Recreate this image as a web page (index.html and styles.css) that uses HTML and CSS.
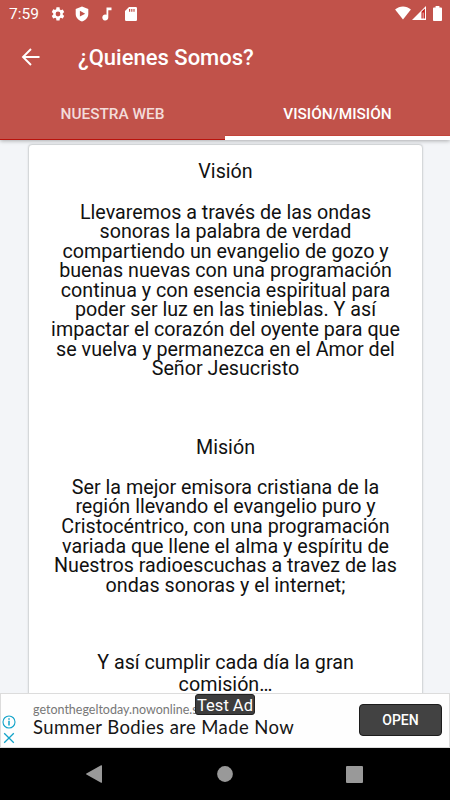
FILE: index.html
```html
<!DOCTYPE html>
<html lang="es">
<head>
<meta charset="utf-8">
<title>¿Quienes Somos?</title>
<link rel="stylesheet" href="styles.css">
</head>
<body>
<div class="screen">
  <header class="header">
    <div class="status">
      <span class="clock">7:59</span>
      <svg class="gear" width="16" height="16" viewBox="0 0 24 24"><path fill="#fff" d="M19.14 12.94c.04-.3.06-.61.06-.94s-.02-.64-.07-.94l2.03-1.58a.49.49 0 0 0 .12-.61l-1.92-3.32a.49.49 0 0 0-.59-.22l-2.39.96c-.5-.38-1.03-.7-1.62-.94l-.36-2.54A.48.48 0 0 0 13.92 2h-3.84c-.24 0-.43.17-.47.41l-.36 2.54c-.59.24-1.13.57-1.62.94l-2.39-.96a.48.48 0 0 0-.59.22L2.74 8.87a.48.48 0 0 0 .12.61l2.03 1.58c-.05.3-.09.63-.09.94s.02.64.07.94l-2.03 1.58a.49.49 0 0 0-.12.61l1.92 3.32c.12.22.37.29.59.22l2.39-.96c.5.38 1.03.7 1.62.94l.36 2.54c.05.24.24.41.48.41h3.84c.24 0 .44-.17.47-.41l.36-2.54c.59-.24 1.13-.56 1.62-.94l2.39.96c.22.08.47 0 .59-.22l1.92-3.32a.48.48 0 0 0-.12-.61zM12 15.6a3.6 3.6 0 1 1 0-7.2 3.6 3.6 0 0 1 0 7.2z"/></svg>
      <svg class="shield" width="14" height="16" viewBox="0 0 14 16"><path fill="#fff" fill-rule="evenodd" d="M7 .5 13.3 3v5c0 3.5-2.5 6.300-6.300 7.500C3.200 14.300.7 11.500.7 8V3zM4.900 4.800v5.800L10.200 7.700z"/></svg>
      <svg class="note" width="10" height="14" viewBox="0 0 10 14"><path fill="#fff" d="M4.500.6h5v2.700H6.300v7.200a3 3 0 1 1-1.800-2.700z"/></svg>
      <svg class="card-icon" width="12" height="14" viewBox="0 0 12 14"><path fill="#fff" fill-rule="evenodd" d="M4 0h6.800A1.200 1.200 0 0 1 12 1.200v11.600a1.200 1.200 0 0 1-1.200 1.200H1.200A1.200 1.200 0 0 1 0 12.800V4zM4 2v2.800h1.200V2zm2.200 0v2.800h1.200V2zm2.200 0v2.800h1.200V2z"/></svg>
      <svg class="wifi" width="16" height="14" viewBox="0 0 16 14"><path fill="#fff" d="M8 13.500.1 3.400C4.800-.5 11.200-.5 15.900 3.400z"/></svg>
      <svg class="signal" width="14" height="14" viewBox="0 0 14 14"><path fill="#fff" d="M14 0v14H0z"/><path fill="#c11e1a" d="M9.500 5.800 12.900 2.600v10H11.500V6.500h-.8v6H9.500z"/></svg>
      <svg class="battery" width="9" height="15" viewBox="0 0 9 15"><path fill="#fff" d="M2.600 0h3.800v1.400h1.500c.6 0 1.100.5 1.100 1.100v11.400c0 .6-.5 1.100-1.100 1.100H1.100C.5 15 0 14.500 0 13.900V2.500c0-.6.5-1.100 1.100-1.100h1.500z"/></svg>
    </div>
    <div class="toolbar">
      <svg class="back" width="20" height="18" viewBox="0 0 20 18"><path d="M18.500 9H2M10 1 2 9l8 8" fill="none" stroke="#fff" stroke-width="1.900"/></svg>
      <h1>¿Quienes Somos?</h1>
    </div>
    <nav class="tabs">
      <div class="tab"><span>NUESTRA WEB</span></div>
      <div class="tab active"><span>VISIÓN/MISIÓN</span></div>
    </nav>
  </header>
  <main class="content">
    <article class="card">
      <h2>Visión</h2>
      <p class="vision">Llevaremos a través de las ondas<br>sonoras la palabra de verdad<br>compartiendo un evangelio de gozo y<br>buenas nuevas con una programación<br>continua y con esencia espiritual para<br>poder ser luz en las tinieblas. Y así<br>impactar el corazón del oyente para que<br>se vuelva y permanezca en el Amor del<br>Señor Jesucristo</p>
      <h2 class="mission-title">Misión</h2>
      <p class="mission">Ser la mejor emisora cristiana de la<br>región llevando el evangelio puro y<br>Cristocéntrico, con una programación<br>variada que llene el alma y espíritu de<br>Nuestros radioescuchas a travez de las<br>ondas sonoras y el internet;</p>
      <p class="closing">Y así cumplir cada día la gran<br>comisión…</p>
    </article>
  </main>
  <aside class="ad">
    <div class="ad-icons">
      <svg width="14" height="14" viewBox="0 0 14 14"><circle cx="7" cy="7" r="6" fill="none" stroke="#12a3c9" stroke-width="1.100"/><path d="M7 5.800v4.600M7 3.200v1.500" stroke="#12a3c9" stroke-width="1.500"/></svg>
      <svg width="12" height="12" viewBox="0 0 12 12"><path d="m1.200 1.200 9.600 9.600m0-9.600-9.600 9.600" stroke="#12a3c9" stroke-width="1.300"/></svg>
    </div>
    <div class="ad-text">
      <div class="ad-url">getonthegeltoday.nowonline.s</div>
      <div class="ad-title">Summer Bodies are Made Now</div>
    </div>
    <div class="ad-button">OPEN</div>
    <div class="test">Test Ad</div>
  </aside>
  <footer class="navbar">
    <svg width="16" height="18" viewBox="0 0 16 18"><path fill="#999" d="M16 .8v16.400c0 .5-.4.800-.9.500L.4 9.500a.6.600 0 0 1 0-1L15.100.3c.5-.3.9 0 .9.500z"/></svg>
    <svg class="home" width="16" height="16" viewBox="0 0 16 16"><circle cx="8" cy="8" r="7.900" fill="#999"/></svg>
    <svg width="17" height="17" viewBox="0 0 17 17"><rect width="17" height="17" rx="1" fill="#999"/></svg>
  </footer>
</div>
</body>
</html>
```
FILE: styles.css
```css
* { box-sizing: border-box; }
body { margin: 0; font-family: Roboto, "Liberation Sans", sans-serif; }
h1, h2, p { margin: 0; font-weight: 400; }
svg { display: block; flex: none; }
.screen { width: 450px; height: 800px; display: flex; flex-direction: column; overflow: hidden; background: #f3f5f8; }
.header { height: 140px; flex: none; background: #c1524a; color: #fff; display: flex; flex-direction: column; box-shadow: 0 1px 4px rgba(0, 0, 0, .3); z-index: 1; }
.status { height: 27px; display: flex; align-items: center; padding: 0 8px 0 9px; }
.clock { width: 41px; font-size: 15.500px; line-height: 26px; padding-top: 1px; }
.gear { margin-right: 9px; }
.shield { margin-right: 13px; }
.note { margin-right: 13px; }
.wifi { margin-left: auto; margin-right: 1px; margin-top: -1px; }
.signal { margin-right: 7px; margin-top: -1px; }
.toolbar { height: 62px; display: flex; align-items: center; padding: 0 0 2px 21px; }
.toolbar h1 { margin: 2px 0 0 37px; font-size: 22px; font-weight: 500; line-height: 30px; white-space: nowrap; }
.tabs { height: 51px; display: grid; grid-template-columns: 1fr 1fr; }
.tab { display: flex; justify-content: center; padding-top: 15px; font-size: 15.400px; line-height: 20px; font-weight: 500; color: #f3dcda; border-bottom: 1px solid #b9130c; }
.tab.active { color: #fff; border-bottom: 4px solid #fff; box-shadow: inset 0 -1px #c3443a; }
.content { flex: 1; min-height: 0; padding: 4px 27px 0 28px; overflow: hidden; }
.card { height: 600px; background: #fff; border: 1px solid #d5d8da; border-radius: 4px; box-shadow: 0 0 2px rgba(0, 0, 0, .12); text-align: center; color: #111; font-size: 19.700px; line-height: 19.600px; padding-top: 17px; white-space: nowrap; }
.card h2 { font-size: 19.700px; line-height: 20px; }
.vision { margin-top: 20.500px; }
.mission-title { margin-top: 59px; }
.mission { margin-top: 20px; }
.closing { margin-top: 57px; line-height: 22px; }
.ad { height: 55px; flex: none; position: relative; display: flex; background: #fefefe; border: 1px solid #dcdcdc; z-index: 1; }
.ad-icons { width: 32px; padding: 21px 0 0 1px; display: flex; flex-direction: column; gap: 3px; }
.ad-icons svg + svg { margin-left: 1px; }
.ad-text { flex: 1; padding-top: 8px; white-space: nowrap; }
.ad-url { width: 163px; overflow: hidden; font: 12.500px/16px Lato, sans-serif; color: #777; }
.ad-title { font: 18.500px/19px Lato, sans-serif; letter-spacing: .4px; color: #161616; }
.ad-button { width: 83px; height: 32px; margin: 10px 7px 0 0; background: #424242; border: 1px solid #1c1c1c; border-radius: 4px; color: #fff; font: 500 14px/30px Roboto, sans-serif; text-align: center; }
.test { position: absolute; left: 194px; top: 0; width: 60px; height: 21px; background: #3d3d3d; border: 1px solid #222; border-radius: 3px; color: #fff; font-size: 16.500px; line-height: 21px; text-align: center; white-space: nowrap; }
.navbar { height: 52px; flex: none; background: #000; display: flex; align-items: center; justify-content: space-between; padding: 0 87px 0 86px; }
.home { margin-left: 1px; }
```
